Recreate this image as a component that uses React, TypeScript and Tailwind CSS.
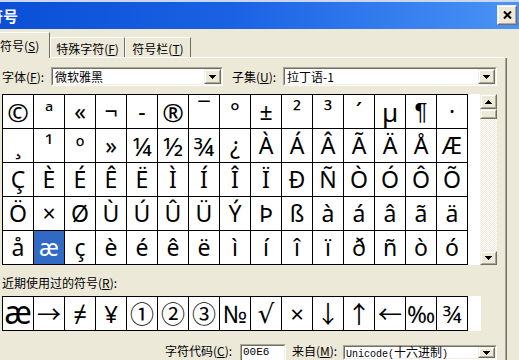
import type { ReactNode } from "react";

const rows = [
  ["©", "ª", "«", "¬", "-", "®", "¯", "°", "±", "²", "³", "´", "µ", "¶", "·"],
  ["¸", "¹", "º", "»", "¼", "½", "¾", "¿", "À", "Á", "Â", "Ã", "Ä", "Å", "Æ"],
  ["Ç", "È", "É", "Ê", "Ë", "Ì", "Í", "Î", "Ï", "Ð", "Ñ", "Ò", "Ó", "Ô", "Õ"],
  ["Ö", "×", "Ø", "Ù", "Ú", "Û", "Ü", "Ý", "Þ", "ß", "à", "á", "â", "ã", "ä"],
  ["å", "æ", "ç", "è", "é", "ê", "ë", "ì", "í", "î", "ï", "ð", "ñ", "ò", "ó"],
];

const recent = ["æ", "→", "≠", "¥", "①", "②", "③", "№", "√", "×", "↓", "↑", "←", "‰", "¾"];

// a few glyphs need their own size / face to look like the reference
const cellExtra: Record<string, string> = {
  "¼": "text-[26px]",
  "½": "text-[26px]",
  "¾": "text-[26px]",
  "¶": "font-['Liberation_Sans'] text-[24px]",
  "µ": "text-[26px]",
  "©": "text-[26px]",
  "®": "text-[26px]",
};

function Raised({ className = "", children }: { className?: string; children?: ReactNode }) {
  return (
    <div className={`border border-t-[#F1EFE2] border-l-[#F1EFE2] border-r-[#716F64] border-b-[#716F64] ${className}`}>
      <div className="w-full h-full border border-t-white border-l-white border-r-[#ACA899] border-b-[#ACA899] bg-[#ECE9D8] flex items-center justify-center">
        {children}
      </div>
    </div>
  );
}

function Sunken({ className = "", children }: { className?: string; children?: ReactNode }) {
  return (
    <div className={`border border-t-[#ACA899] border-l-[#ACA899] border-r-white border-b-white ${className}`}>
      <div className="w-full h-full border border-t-[#716F64] border-l-[#716F64] border-r-[#F1EFE2] border-b-[#F1EFE2] bg-white flex items-center">
        {children}
      </div>
    </div>
  );
}

function Down() {
  return (
    <svg width="7" height="4" viewBox="0 0 7 4">
      <path d="M0 0h7v1h-1v1h-1v1h-1v1h-1v-1h-1v-1h-1v-1h-1z" fill="#000" />
    </svg>
  );
}

function Up() {
  return (
    <svg width="7" height="4" viewBox="0 0 7 4">
      <path d="M0 4h7v-1h-1v-1h-1v-1h-1v-1h-1v1h-1v1h-1v1h-1z" fill="#000" />
    </svg>
  );
}

function Combo({ className, text }: { className: string; text: ReactNode }) {
  return (
    <Sunken className={className}>
      <span className="flex-1 pl-[2px] leading-[15px] whitespace-nowrap overflow-hidden">{text}</span>
      <Raised className="w-[17px] h-full">
        <Down />
      </Raised>
    </Sunken>
  );
}

export default function App() {
  return (
    <div className="w-[519px] h-[360px] overflow-hidden bg-[#ECE9D8] text-black text-[12px] font-['Noto_Sans_CJK_SC',sans-serif]">
      {/* title bar */}
      <div className="h-[29px] border-t-2 border-[#C9D8F2] bg-[linear-gradient(to_right,#0A4FD6,#1A62E4_45%,#4A93F5)] flex items-center justify-between">
        <span className="ml-[-12px] text-white font-bold text-[15px] leading-none">符号</span>
        <Raised className="w-[20px] h-[20px] mr-[2px] mt-[-1px]">
          <svg width="9" height="8" viewBox="0 0 9 8">
            <path d="M1 0.5 L8 7.5 M8 0.5 L1 7.5" stroke="#000" strokeWidth="2" />
          </svg>
        </Raised>
      </div>

      {/* tabs */}
      <div className="flex items-end h-[29px] w-[507px] border-b border-white">
        <div className="relative -mb-px h-[26px] w-[50px] border-t border-white border-r border-r-[#716F64] bg-[#ECE9D8] pt-[6px] leading-[14px] whitespace-nowrap">
          符号(<u>S</u>)
        </div>
        <div className="h-[20px] w-[75px] border-t border-l border-white border-r border-r-[#716F64] pt-[4px] leading-[14px] text-center whitespace-nowrap">
          特殊字符(<u>F</u>)
        </div>
        <div className="h-[20px] w-[66px] border-t border-l border-white border-r border-r-[#716F64] pt-[4px] leading-[14px] text-center whitespace-nowrap">
          符号栏(<u>T</u>)
        </div>
      </div>

      {/* panel */}
      <div className="flex h-[320px]">
        <div className="w-[505px]">
          {/* font row */}
          <div className="mt-[9px] pl-[2px] flex items-center h-[19px]">
            <span className="w-[49px] whitespace-nowrap">字体(<u>F</u>):</span>
            <Combo className="w-[172px] h-[19px]" text="微软雅黑" />
            <span className="ml-[9px] w-[51px] whitespace-nowrap">子集(<u>U</u>):</span>
            <Combo className="w-[214px] h-[19px]" text="拉丁语-1" />
          </div>

          {/* symbol grid */}
          <div className="mt-[8px] ml-[2px] flex">
            <div className="grid grid-cols-[repeat(15,30px)] grid-rows-[repeat(5,33px)] gap-px bg-black border border-black font-['Noto_Sans','Noto_Sans_CJK_SC',sans-serif] text-[23px]">
              {rows.flat().map((c, i) => (
                <div
                  key={i}
                  className={`flex items-center justify-center leading-none ${cellExtra[c] ?? ""} ${i === 61 ? "bg-[#316AC5] text-white" : "bg-white"}`}
                >
                  {c}
                </div>
              ))}
            </div>
            <div className="w-[12px] bg-white" />
            <div className="w-[17px] flex flex-col">
              <Raised className="h-[15px]">
                <Up />
              </Raised>
              <Raised className="h-[10px]" />
              <div className="flex-1 bg-[repeating-conic-gradient(#ffffff_0%_25%,#ECE9D8_0%_50%)] bg-[length:2px_2px]" />
              <Raised className="h-[14px]">
                <Down />
              </Raised>
            </div>
          </div>

          {/* recent */}
          <div className="mt-[11px] ml-[2px] h-[14px] leading-[14px] whitespace-nowrap">
            近期使用过的符号(<u>R</u>):
          </div>
          <div className="mt-[6px] ml-[2px] flex">
            <div className="grid grid-cols-[repeat(15,30px)] grid-rows-[33px] gap-px bg-black border border-black font-['Noto_Sans','Noto_Sans_CJK_SC',sans-serif] text-[24px]">
              {recent.map((c, i) => (
                <div
                  key={i}
                  className={`bg-white flex items-center justify-center leading-none ${i === 0 ? "text-[32px] pb-[4px]" : ""} ${c === "√" ? "font-['DejaVu_Sans'] text-[26px]" : ""}`}
                >
                  {c}
                </div>
              ))}
            </div>
            <div className="w-[13px] bg-white" />
          </div>

          {/* code row */}
          <div className="mt-[13px] flex items-start">
            <span className="ml-[165px] w-[75px] leading-[13px] whitespace-nowrap">字符代码(<u>C</u>):</span>
            <Sunken className="w-[46px] h-[20px]">
              <span className="pl-[1px] pb-[4px] font-['Liberation_Mono',monospace] text-[11px] leading-[11px]">00E6</span>
            </Sunken>
            <span className="ml-[6px] w-[51px] leading-[13px] whitespace-nowrap">来自(<u>M</u>):</span>
            <Sunken className="w-[154px] h-[15px] mt-px">
              <span className="flex-1 pl-px leading-[11px] whitespace-nowrap">
                <span className="font-['Liberation_Mono',monospace] text-[10px]">Unicode(</span>十六进制<span className="font-['Liberation_Mono',monospace] text-[10px]">)</span>
              </span>
              <Raised className="w-[17px] h-full">
                <Down />
              </Raised>
            </Sunken>
          </div>
        </div>
        <div className="w-px bg-[#ACA899]" />
        <div className="w-px bg-[#716F64]" />
      </div>
    </div>
  );
}
